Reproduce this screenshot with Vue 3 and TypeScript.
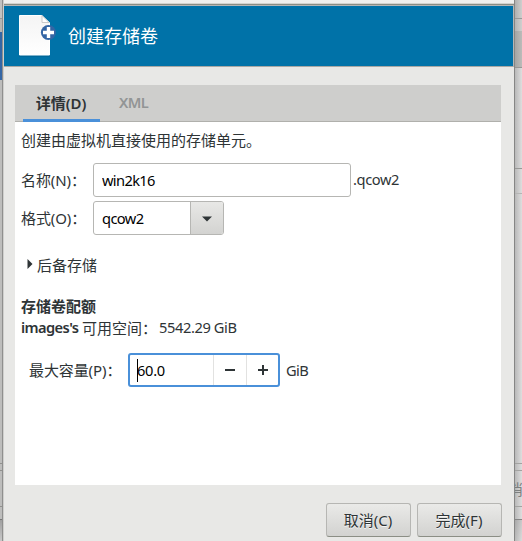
<template>
  <div class="screen">
    <div class="backdrop-left">
      <div class="left-top"></div>
      <div class="left-toolbar"></div>
      <div class="left-selected"></div>
      <div class="left-list"></div>
      <div class="left-gap"></div>
      <div class="left-footer"></div>
      <div class="left-edge"></div>
      <div class="left-shadow"></div>
    </div>

    <div class="dialog">
      <div class="title-edge"></div>
      <header class="banner">
        <svg class="banner-icon" width="38" height="44" viewBox="0 0 38 44">
          <defs>
            <linearGradient id="paper" x1="0" y1="0" x2="0" y2="1">
              <stop offset="0" stop-color="#f4f4f4" />
              <stop offset="1" stop-color="#ffffff" />
            </linearGradient>
          </defs>
          <path d="M1 42h31" stroke="#00507c" stroke-opacity=".6" />
          <path d="M1.500 1.500h22.500l7.500 7v32.500h-30z" fill="url(#paper)" stroke="#fff" />
          <path d="M24 1L32 8.500V1z" fill="#0072a8" />
          <path d="M24 1.500v7h7z" fill="#fff" stroke="#c4c4c4" stroke-width=".9" />
          <circle cx="30.400" cy="18.500" r="7.500" fill="#3465a4" />
          <path d="M30.500 13v11M25 18.500h11" stroke="#fff" stroke-width="3.400" />
        </svg>
        <h1>创建存储卷</h1>
      </header>

      <main class="content">
        <div class="tabs">
          <button
            v-for="tab in tabs"
            :key="tab.id"
            class="tab"
            :class="[tab.id, { active: activeTab === tab.id }]"
            type="button"
            @click="activeTab = tab.id"
          >
            {{ tab.label }}
          </button>
        </div>

        <div class="page">
          <p class="intro">创建由虚拟机直接使用的存储单元。</p>

          <div class="row name-row">
            <label class="label" for="vol-name">名称(N)：</label>
            <input id="vol-name" v-model="name" class="entry" type="text">
            <span class="suffix">.{{ format }}</span>
          </div>

          <div class="row format-row">
            <label class="label">格式(O)：</label>
            <div class="combo">
              <span class="combo-text">{{ format }}</span>
              <button class="combo-btn" type="button">
                <svg width="10" height="6" viewBox="0 0 10 6"><path d="M0 .5h10L5 5.500z" fill="#2e3436" /></svg>
              </button>
            </div>
          </div>

          <div class="expander">
            <svg width="6" height="10" viewBox="0 0 6 10"><path d="M.5 0v10l5-5z" fill="#2e3436" /></svg>
            <span>后备存储</span>
          </div>

          <h2>存储卷配额</h2>
          <div class="free">
            <b>images's</b>
            <span class="free-label">可用空间：</span>
            <span class="free-size">5542.29 GiB</span>
          </div>

          <div class="row capacity-row">
            <label class="capacity-label">最大容量(P)：</label>
            <div class="spin">
              <div class="spin-value"><i class="caret"></i><span>{{ capacity.toFixed(1) }}</span></div>
              <button class="spin-btn" type="button" @click="step(-1)">
                <svg width="12" height="12" viewBox="0 0 12 12"><path d="M1 6h10" stroke="#2e3436" stroke-width="2" /></svg>
              </button>
              <button class="spin-btn" type="button" @click="step(1)">
                <svg width="12" height="12" viewBox="0 0 12 12"><path d="M1 6h10M6 1v10" stroke="#2e3436" stroke-width="2" /></svg>
              </button>
            </div>
            <span class="unit">GiB</span>
          </div>
        </div>
      </main>

      <footer class="actions">
        <button class="btn" type="button">取消(C)</button>
        <button class="btn" type="button">完成(F)</button>
      </footer>
    </div>

    <div class="backdrop-right">
      <div class="right-top"></div>
      <div class="right-tool"></div>
      <div class="right-bar"></div>
      <div class="right-panel"></div>
      <div class="right-head"></div>
      <div class="right-list"></div>
      <div class="right-gap"></div>
      <div class="right-button"><span>消</span></div>
      <div class="right-edge"></div>
      <div class="right-shadow"></div>
    </div>
  </div>
</template>

<script setup lang="ts">
import { ref } from 'vue'

interface Tab {
  id: string
  label: string
}

const tabs: Tab[] = [
  { id: 'details', label: '详情(D)' },
  { id: 'xml', label: 'XML' }
]

const activeTab = ref('details')
const name = ref('win2k16')
const format = ref('qcow2')
const capacity = ref(60)

const step = (delta: number) => {
  capacity.value = Math.max(0, capacity.value + delta)
}
</script>

<style>
body {
  margin: 0;
  overflow: hidden;
}
</style>

<style scoped>
.screen {
  display: flex;
  width: 522px;
  height: 541px;
  overflow: hidden;
  background: #e8e8e6;
  color: #2e3436;
  font-family: "Noto Sans", "Noto Sans CJK SC", sans-serif;
  font-size: 14.67px;
  line-height: 22px;
}

.screen * {
  box-sizing: border-box;
}

button,
input {
  margin: 0;
  padding: 0;
  border: none;
  background: none;
  color: inherit;
  font: inherit;
  outline: none;
}

svg {
  display: block;
  flex: none;
}

/* parts of the parent window on both sides */
.backdrop-left {
  flex: none;
  width: 3px;
  border-right: 1px solid #8f8f8e;
  background: #bdbdbc;
}

.left-top {
  height: 19px;
  background: #c2c2c1;
  border-bottom: 1px solid #999;
}

.left-toolbar {
  height: 13px;
  background: #b7b7b4;
}

.left-selected {
  height: 48px;
  background: #3567a5;
}

.left-list {
  height: 384px;
  border-bottom: 1px solid #91918e;
}

.left-gap {
  height: 7px;
  border-bottom: 1px solid #91918e;
}

.left-footer {
  height: 36px;
  border-bottom: 1px solid #91918e;
}

.left-edge {
  height: 13px;
  border-bottom: 1px solid #777;
}

.left-shadow {
  height: 21px;
  background: linear-gradient(#a0a0a0, #c8c8c8);
}

.backdrop-right {
  flex: none;
  width: 8px;
  border-left: 1px solid #868685;
  background: linear-gradient(90deg, #b9b9b9, #dedede);
}

.right-top {
  height: 19px;
  background: linear-gradient(90deg, #b0b0af, #cfcfce);
  border-bottom: 1px solid #999;
}

.right-tool {
  height: 12px;
  background: linear-gradient(90deg, #b5b5b4, #d0d0cf);
}

.right-bar {
  height: 37px;
  background: linear-gradient(90deg, #a5a5a3, #bcbcba);
  border-bottom: 1px solid #979795;
}

.right-panel {
  height: 101px;
  border-bottom: 1px solid #999997;
}

.right-head {
  height: 25px;
  border-bottom: 1px solid #b5b5b4;
}

.right-list {
  height: 270px;
  border-bottom: 1px solid #a3a3a1;
}

.right-gap {
  height: 7px;
  border-bottom: 1px solid #a3a3a1;
}

.right-button {
  display: flex;
  justify-content: flex-end;
  height: 36px;
  padding-top: 7px;
  overflow: hidden;
  border-bottom: 1px solid #a3a3a1;
  color: #7d807f;
  font-size: 15px;
}

.right-button span {
  flex: none;
  margin-right: -1px;
}

.right-edge {
  height: 13px;
  border-bottom: 1px solid #858585;
}

.right-shadow {
  height: 21px;
  background: linear-gradient(100deg, #a8a8a8, #dcdcdc);
}

.dialog {
  display: flex;
  flex: none;
  flex-direction: column;
  width: 511px;
  border-left: 1px solid #cfcfcd;
  background: #e8e8e6;
}

.title-edge {
  height: 6px;
  border-bottom: 1px solid #b5b7b6;
  background: linear-gradient(#f0f0ee 3px, #d4d4d0 3px, #d4d4d0 4px, #8b8e85 4px);
}

.banner {
  display: flex;
  align-items: flex-start;
  height: 61px;
  padding: 8px 0 0 14px;
  border-right: 1px solid #b5b7b6;
  border-bottom: 1px solid #a8a8a5;
  background: #0072a8;
}

.banner h1 {
  margin: 8px 0 0 12px;
  color: #fff;
  font-size: 18px;
  font-weight: 400;
  line-height: 28px;
}

.content {
  width: 486px;
  height: 400px;
  margin: 18px 0 0 11px;
  background: #fff;
}

.tabs {
  display: flex;
  height: 37px;
  padding-left: 8px;
  border-bottom: 1px solid #b0b0ac;
  background: #cececc;
}

.tab {
  height: 37px;
  border-bottom: 3px solid transparent;
  color: #929595;
  font-weight: 700;
}

.tab.details {
  width: 77px;
  padding: 1px 1px 0 0;
  font-size: 15px;
  font-weight: 600;
}

.tab.xml {
  width: 69px;
  padding: 0 2px 1px 0;
  font-weight: 600;
  letter-spacing: -0.6px;
}

.tab.active {
  border-bottom-color: #4a90d9;
  color: #2e3436;
}

.page {
  padding: 7px 6px 0;
}

.intro {
  margin: 0 0 12px;
  font-size: 15px;
}

.row {
  display: flex;
  align-items: center;
  height: 34px;
}

.label {
  flex: none;
  width: 72px;
  padding-bottom: 1px;
  font-size: 15px;
  letter-spacing: -0.1px;
  white-space: nowrap;
}

.entry {
  width: 258px;
  height: 34px;
  padding: 0 8px;
  border: 1px solid #b6b6b3;
  border-radius: 3px;
  background: #fff;
  color: #000;
  letter-spacing: -0.65px;
}

.suffix {
  margin-left: 2px;
  padding-bottom: 2px;
  letter-spacing: -0.4px;
}

.format-row {
  margin-top: 4px;
}

.combo {
  display: flex;
  width: 131px;
  height: 34px;
  border: 1px solid #b6b6b3;
  border-radius: 3px;
}

.combo-text {
  flex: 1;
  padding: 5px 8px 0;
  color: #000;
  letter-spacing: -0.6px;
}

.combo-btn {
  display: flex;
  align-items: center;
  justify-content: center;
  width: 33px;
  padding-top: 1px;
  border-left: 1px solid #b6b6b3;
  border-radius: 0 2px 2px 0;
  background: linear-gradient(#e8e8e6, #d3d3d1);
}

.expander {
  display: flex;
  align-items: center;
  gap: 4px;
  margin-top: 19px;
  padding-left: 6px;
  font-size: 15px;
}

.expander svg {
  margin-bottom: 2px;
}

h2 {
  margin: 19px 0 0;
  font-size: 15px;
  font-weight: 700;
  line-height: 22px;
}

.free {
  display: flex;
  height: 22px;
  margin-bottom: 14px;
}

.free b {
  width: 57px;
  margin-top: -1px;
  font-weight: 600;
  letter-spacing: -0.6px;
  white-space: nowrap;
}

.free-label {
  width: 77px;
  margin-left: 4px;
  font-size: 15px;
}

.free-size {
  margin-top: -1px;
  letter-spacing: -0.4px;
}

.capacity-row {
  padding-left: 8px;
}

.capacity-label {
  flex: none;
  width: 99px;
  font-size: 15px;
  letter-spacing: -0.1px;
  white-space: nowrap;
}

.spin {
  display: flex;
  width: 152px;
  height: 34px;
  border: 2px solid #4a90d9;
  border-radius: 3px;
}

.spin-value {
  display: flex;
  flex: 1;
  align-items: center;
  padding-left: 7px;
  color: #000;
  letter-spacing: -0.3px;
}

.caret {
  width: 1px;
  height: 23px;
  margin-right: -1px;
  background: #000;
}

.spin-btn {
  display: flex;
  align-items: center;
  justify-content: center;
  width: 33px;
  border-left: 1px solid #e2e2e1;
}

.spin-btn:last-child {
  width: 32px;
}

.unit {
  margin-left: 6px;
  padding-bottom: 1px;
  letter-spacing: -0.6px;
}

.actions {
  display: flex;
  justify-content: flex-end;
  gap: 6px;
  padding: 18px 12px 0 0;
}

.btn {
  width: 85px;
  height: 34px;
  padding-right: 1px;
  border: 1px solid #b6b6b3;
  border-bottom-color: #8b8e85;
  border-radius: 3px;
  background: linear-gradient(#eaeae8, #d2d2d0);
  font-size: 15px;
  text-shadow: 0 1px rgba(255, 255, 255, 0.77);
}
</style>
